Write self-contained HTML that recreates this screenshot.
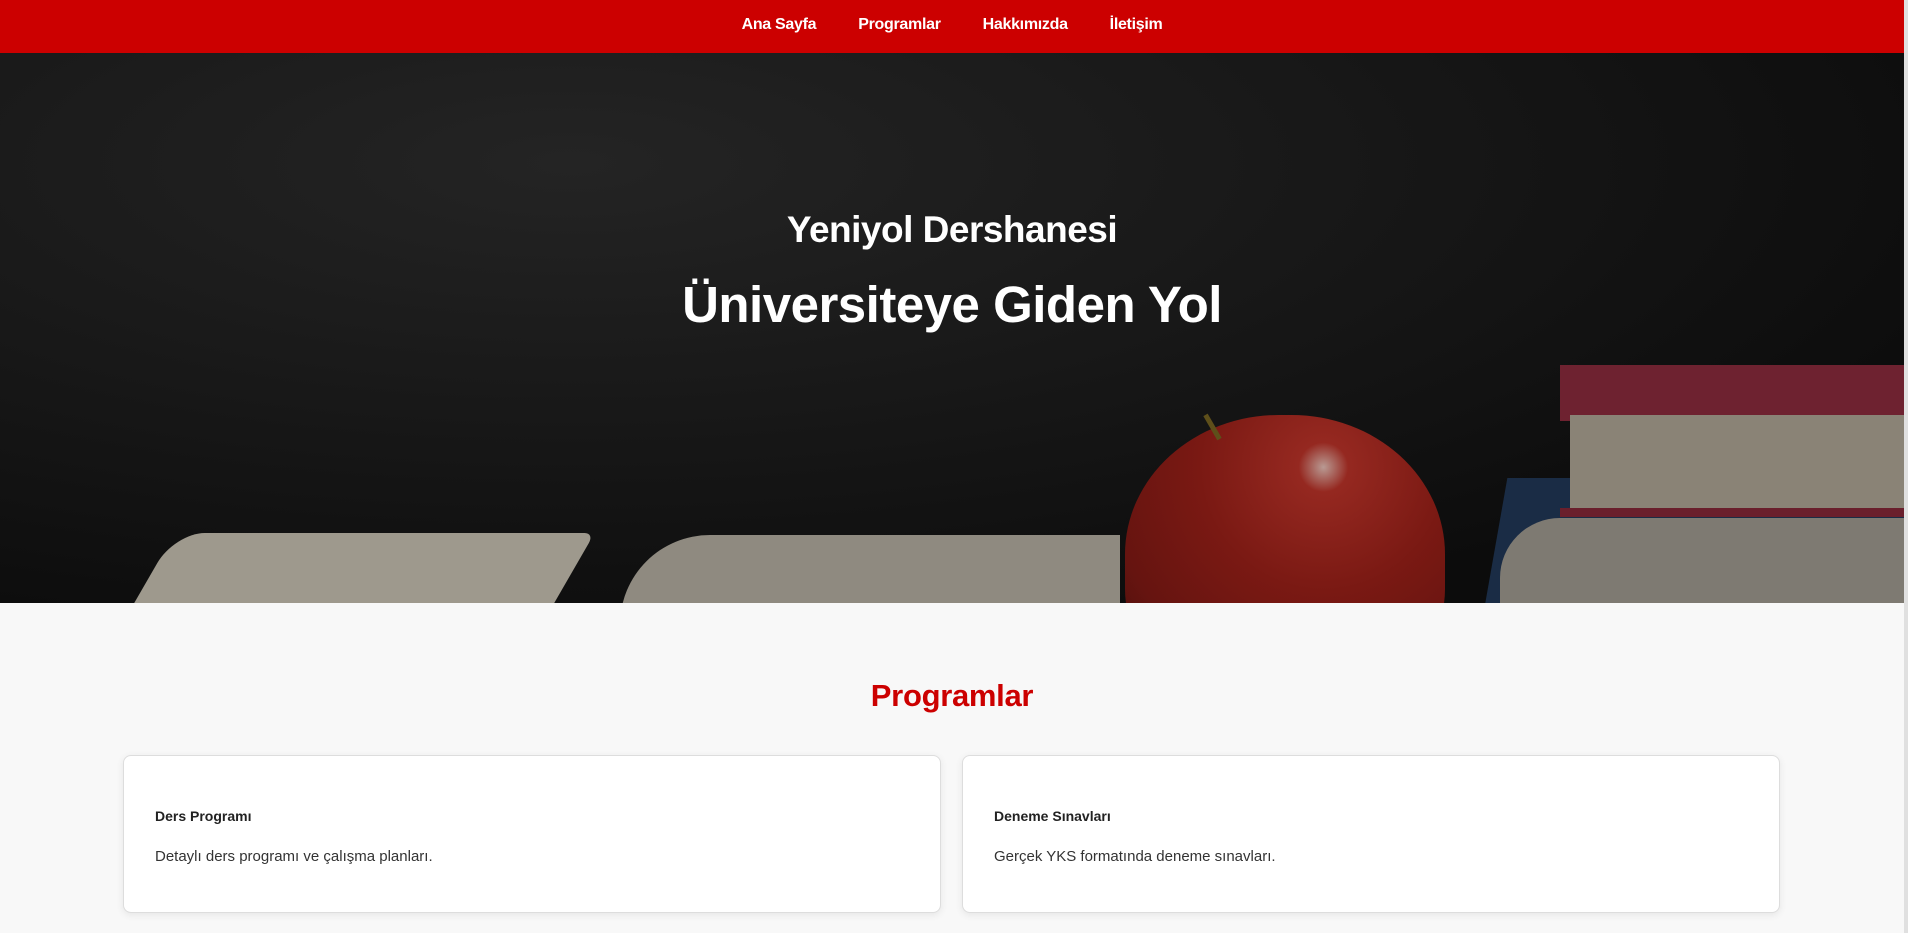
<!DOCTYPE html>
<html><head><meta charset="utf-8"><style>
*{margin:0;padding:0;box-sizing:border-box}
body{width:1908px;height:933px;overflow:hidden;background:#f8f8f8;font-family:"Liberation Sans",sans-serif;position:relative}
.sb{position:absolute;right:0;top:0;width:4px;height:933px;background:#e0e0e0}
nav{position:absolute;left:0;top:0;width:1904px;height:53px;background:#cc0000;text-align:center}
nav a{color:#fff;font-weight:bold;font-size:16px;text-decoration:none;display:inline-block;margin:0 21px;line-height:50px;letter-spacing:-.3px}
.hero{position:absolute;left:0;top:53px;width:1904px;height:550px;overflow:hidden;background:radial-gradient(ellipse at 30% 20%,#242424,#151515 50%,#0c0c0c 80%)}
.hero h1,.hero h2{position:absolute;left:0;width:1904px;text-align:center;color:#fff;letter-spacing:-.5px}
.hero h2{top:156px;font-size:37px;font-weight:bold}
.hero h1{top:222px;font-size:51px;font-weight:bold}
.sh{position:absolute}
h3.t{position:absolute;top:678px;left:0;width:1904px;text-align:center;color:#cc0000;font-size:31px;letter-spacing:-.3px}
.card{position:absolute;top:755px;height:158px;background:#fff;border:1px solid #ddd;border-radius:8px;box-shadow:0 2px 8px rgba(0,0,0,.08)}
.card b{position:absolute;left:31px;top:52px;font-size:14px;color:#222}
.card p{position:absolute;left:31px;top:92px;font-size:15px;color:#333}
</style></head><body>
<nav><a>Ana Sayfa</a><a>Programlar</a><a>Hakkımızda</a><a>İletişim</a></nav>
<div class="hero">
 <div class="sh" style="left:140px;top:480px;width:420px;height:120px;background:#9e998d;transform:skewX(-30deg);border-radius:30px 10px 0 0"></div>
 <div class="sh" style="left:620px;top:482px;width:500px;height:120px;background:#8f8a80;border-radius:90px 0 0 0"></div>
 <div class="sh" style="left:1495px;top:425px;width:420px;height:140px;background:#1a2c45;transform:skewX(-10deg)"></div>
 <div class="sh" style="left:1500px;top:465px;width:420px;height:100px;background:#7e7a72;border-radius:60px 0 0 0"></div>
 <div class="sh" style="left:1560px;top:312px;width:350px;height:56px;background:#6e2230"></div>
 <div class="sh" style="left:1570px;top:362px;width:340px;height:98px;background:#8a8376"></div>
 <div class="sh" style="left:1560px;top:455px;width:350px;height:9px;background:#6a1f2c"></div>
 <div class="sh" style="left:1125px;top:362px;width:320px;height:290px;border-radius:48% 48% 40% 40%;background:radial-gradient(circle at 62% 18%,#b99a93 0,#952820 8%,#7a1913 40%,#661410 70%,#3d0c08 100%)"></div>
 <div class="sh" style="left:1210px;top:360px;width:5px;height:28px;background:#5e4f1a;transform:rotate(-30deg)"></div>
 <h2>Yeniyol Dershanesi</h2>
 <h1>Üniversiteye Giden Yol</h1>
</div>
<h3 class="t">Programlar</h3>
<div class="card" style="left:123px;width:818px"><b>Ders Programı</b><p>Detaylı ders programı ve çalışma planları.</p></div>
<div class="card" style="left:962px;width:818px"><b>Deneme Sınavları</b><p>Gerçek YKS formatında deneme sınavları.</p></div>
<div class="sb"></div>
</body></html>
